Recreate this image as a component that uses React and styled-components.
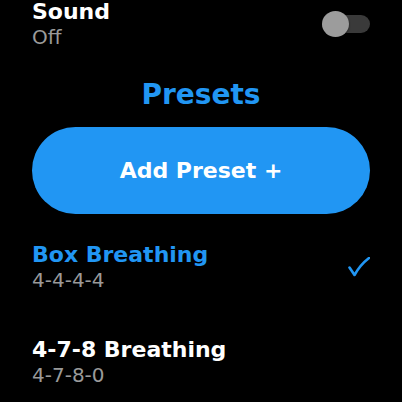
import React from "react";
import styled, { createGlobalStyle } from "styled-components";

const GlobalStyle = createGlobalStyle`
  html, body {
    margin: 0;
    padding: 0;
    background: #000;
  }
  body {
    font-family: "DejaVu Sans", "Liberation Sans", sans-serif;
    -webkit-font-smoothing: antialiased;
  }
`;

const Screen = styled.div`
  width: 402px;
  height: 402px;
  overflow: hidden;
  background: #000;
  padding: 0 32px;
  box-sizing: border-box;
`;

const SettingRow = styled.div`
  display: flex;
  align-items: center;
  justify-content: space-between;
  margin-top: -1px;
`;

const TextBlock = styled.div`
  display: flex;
  flex-direction: column;
`;

const Title = styled.div`
  font-size: 22px;
  line-height: 25px;
  font-weight: 700;
  color: ${(p) => (p.$active ? "#2196f3" : "#fff")};
`;

const Subtitle = styled.div`
  font-size: 20px;
  line-height: 24px;
  font-weight: 400;
  color: #9a9a9a;
  margin-top: 1px;
`;

const Track = styled.div`
  position: relative;
  width: 48px;
  height: 18px;
  border-radius: 9px;
  background: #3a3a3a;
`;

const Knob = styled.div`
  position: absolute;
  left: 0;
  top: -4px;
  width: 27px;
  height: 26px;
  border-radius: 50%;
  background: #9c9c9c;
  box-shadow: 0 1px 2px rgba(0, 0, 0, 0.5);
`;

const SectionTitle = styled.h2`
  margin: 29px 0 0;
  font-size: 28px;
  line-height: 34px;
  font-weight: 700;
  color: #2196f3;
  text-align: center;
`;

const AddButton = styled.button`
  display: flex;
  align-items: center;
  justify-content: center;
  width: 100%;
  height: 87px;
  margin-top: 15px;
  border: none;
  border-radius: 44px;
  background: #2196f3;
  color: #fff;
  font-family: inherit;
  font-size: 22px;
  font-weight: 700;
`;

const PresetList = styled.div`
  margin-top: 5px;
  display: flex;
  flex-direction: column;
`;

const PresetItem = styled.div`
  display: flex;
  align-items: center;
  justify-content: space-between;
  padding: 23px 0 22px;
`;

const Check = () => (
  <svg width="22" height="20" viewBox="0 0 22 20">
    <path
      d="M1.5 10.5 L6.5 18 Q12 8 21 1"
      fill="none"
      stroke="#2196f3"
      strokeWidth="2.6"
      strokeLinecap="round"
      strokeLinejoin="round"
    />
  </svg>
);

const presets = [
  { name: "Box Breathing", pattern: "4-4-4-4", selected: true },
  { name: "4-7-8 Breathing", pattern: "4-7-8-0", selected: false },
];

export default function App() {
  return (
    <>
      <GlobalStyle />
      <Screen>
        <SettingRow>
          <TextBlock>
            <Title>Sound</Title>
            <Subtitle>Off</Subtitle>
          </TextBlock>
          <Track>
            <Knob />
          </Track>
        </SettingRow>
        <SectionTitle>Presets</SectionTitle>
        <AddButton>Add Preset +</AddButton>
        <PresetList>
          {presets.map((p) => (
            <PresetItem key={p.name}>
              <TextBlock>
                <Title $active={p.selected}>{p.name}</Title>
                <Subtitle>{p.pattern}</Subtitle>
              </TextBlock>
              {p.selected && <Check />}
            </PresetItem>
          ))}
        </PresetList>
      </Screen>
    </>
  );
}
